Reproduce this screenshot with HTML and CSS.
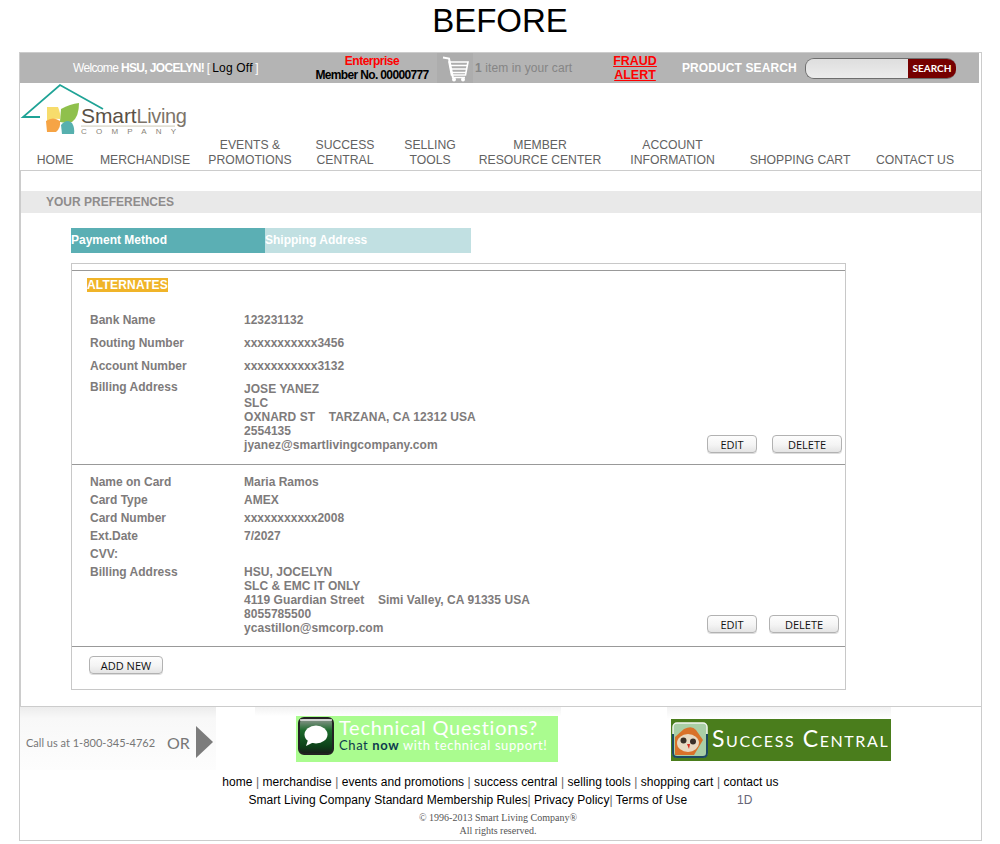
FILE: index.html
```html
<!DOCTYPE html>
<html lang="en">
<head>
<meta charset="utf-8">
<title>Your Preferences</title>
<link rel="stylesheet" href="styles.css">
</head>
<body>
<h1 class="title">BEFORE</h1>
<div class="page">
  <div class="topbar">
    <div class="welcome">Welcome <b>HSU, JOCELYN!</b> [ <a class="logoff">Log Off</a> ]</div>
    <div class="member"><div class="tier">Enterprise</div><div class="memno">Member No. 00000777</div></div>
    <div class="cartbox">
      <svg class="carticon" viewBox="0 0 36 30" width="36" height="30" aria-hidden="true">
        <path d="M6 4.500 L12 5.500 L16 25" fill="none" stroke="#fff" stroke-width="2"/>
        <path d="M12 9 H31 L28.500 22 H14.500 Z" fill="none" stroke="#fff" stroke-width="1.600"/>
        <path d="M13 12.500 H30 M14 16 H29.500 M14.500 19.500 H29" stroke="#fff" stroke-width="1.500"/>
        <path d="M15 24.500 H28" stroke="#fff" stroke-width="1.500"/>
        <circle cx="17" cy="26.500" r="2" fill="#fff"/><circle cx="26" cy="26.500" r="2" fill="#fff"/>
      </svg>
    </div>
    <div class="carttext"><b>1</b> item in your cart</div>
    <a class="fraud">FRAUD<br>ALERT</a>
    <div class="searchlabel">PRODUCT SEARCH</div>
    <div class="searchbox"><div class="searchfield"></div><div class="searchbtn">SEARCH</div></div>
  </div>

  <svg class="logo" viewBox="20 83 170 55" width="170" height="55" role="img" aria-label="Smart Living Company">
    <path d="M40 117 H23 L60 85 L103 109" fill="none" stroke="#1fa396" stroke-width="1.800"/>
    <path d="M47 107 H58 Q61 114 60 119 Q52 118 47 122 Z" fill="#f7dc6c"/>
    <path d="M61 109 Q70 104 79 103 Q79 117 72 122 Q66 123 60 122 Z" fill="#8fc04c"/>
    <path d="M46 121 Q53 116 60 121 Q61 128 56 132 H47 Z" fill="#f6a445"/>
    <path d="M61 125 Q67 118 72 123 Q75 128 74 134 H62 Z" fill="#56b0ae"/>
    <text class="logo-smart" x="81" y="123">Smart<tspan class="logo-living">Living</tspan></text>
    <rect x="81" y="125.500" width="94" height="1.200" fill="#d6d3c4"/>
    <text class="logo-company" x="81" y="134">COMPANY</text>
  </svg>

  <nav class="nav">
    <a>HOME</a>
    <a>MERCHANDISE</a>
    <a>EVENTS &amp;<br>PROMOTIONS</a>
    <a>SUCCESS<br>CENTRAL</a>
    <a>SELLING<br>TOOLS</a>
    <a>MEMBER<br>RESOURCE CENTER</a>
    <a>ACCOUNT<br>INFORMATION</a>
    <a>SHOPPING CART</a>
    <a>CONTACT US</a>
  </nav>

  <main class="main">
    <div class="prefbar">YOUR PREFERENCES</div>
    <div class="tabs">
      <div class="tab tab-active">Payment Method</div>
      <div class="tab tab-idle">Shipping Address</div>
    </div>
    <section class="panel">
      <div class="sec sec-bank">
        <div class="alt"><span class="alt-label">ALTERNATES</span></div>
        <div class="row row-tall"><div>Bank Name</div><div>123231132</div></div>
        <div class="row row-tall"><div>Routing Number</div><div>xxxxxxxxxxx3456</div></div>
        <div class="row row-tall"><div>Account Number</div><div>xxxxxxxxxxx3132</div></div>
        <div class="row row-addr row-addr-bank">
          <div>Billing Address</div>
          <div class="addr">JOSE YANEZ<br>SLC<br>OXNARD ST &nbsp; &nbsp;TARZANA, CA 12312 USA<br>2554135<br>jyanez@smartlivingcompany.com</div>
          <div class="actions actions-bank"><button class="btn btn-edit">EDIT</button><button class="btn btn-del">DELETE</button></div>
        </div>
      </div>
      <div class="sec sec-card">
        <div class="row"><div>Name on Card</div><div>Maria Ramos</div></div>
        <div class="row"><div>Card Type</div><div>AMEX</div></div>
        <div class="row"><div>Card Number</div><div>xxxxxxxxxxx2008</div></div>
        <div class="row"><div>Ext.Date</div><div>7/2027</div></div>
        <div class="row"><div>CVV:</div><div></div></div>
        <div class="row row-addr">
          <div>Billing Address</div>
          <div class="addr">HSU, JOCELYN<br>SLC &amp; EMC IT ONLY<br>4119 Guardian Street &nbsp; &nbsp;Simi Valley, CA 91335 USA<br>8055785500<br>ycastillon@smcorp.com</div>
          <div class="actions actions-card"><button class="btn btn-edit">EDIT</button><button class="btn btn-del">DELETE</button></div>
        </div>
      </div>
      <div class="sec-add"><button class="btn btn-add">ADD NEW</button></div>
    </section>
  </main>

  <footer class="footer">
    <div class="promos">
      <div class="promo-call">
        <span class="call-text">Call us at 1-800-345-4762</span><span class="call-or">OR</span>
        <svg class="call-arrow" viewBox="0 0 18 32" width="18" height="32" aria-hidden="true"><path d="M0 0 L17 16 L0 32 Z" fill="#7c7c7c"/></svg>
      </div>
      <div class="promo-tech-wrap">
        <div class="promo-tech">
          <svg class="tech-icon" viewBox="0 0 36 38" width="36" height="38" aria-hidden="true">
            <defs><linearGradient id="techg" x1="0" y1="0" x2="0" y2="1"><stop offset="0" stop-color="#9a9a9a"/><stop offset=".35" stop-color="#1c6a2c"/><stop offset=".8" stop-color="#0c3f18"/><stop offset="1" stop-color="#1a1a1a"/></linearGradient></defs>
            <rect x="1" y="1" width="34" height="36" rx="5" fill="url(#techg)" stroke="#222" stroke-width="2"/>
            <path d="M2 3 H34" stroke="#e8e8e8" stroke-width="1.500"/>
            <ellipse cx="18" cy="17.500" rx="11.500" ry="9" fill="#fff"/>
            <path d="M10 23 L8 29 L16 25 Z" fill="#fff"/>
          </svg>
          <div class="tech-copy">
            <div class="tech-head">Technical Questions?</div>
            <div class="tech-sub"><span class="tech-chat">Chat</span> <span class="tech-now">now</span> with technical support!</div>
          </div>
        </div>
      </div>
      <div class="promo-success-wrap">
        <div class="promo-success">
          <svg class="owl" viewBox="0 0 36 36" width="36" height="36" aria-hidden="true">
            <rect x="1" y="1" width="34" height="34" rx="4" fill="#a9cfa6" stroke="#f2f5ee" stroke-width="1.500"/>
            <path d="M1 12 V31 Q1 35 5 35 H31 Q35 35 35 31 V12" fill="none" stroke="#1d4a63" stroke-width="2"/>
            <path d="M3 33 V15 L12 7 Q20 3 24 8 L31 18 L22 33 Z" fill="#d9722a"/>
            <ellipse cx="16" cy="21" rx="11" ry="9" fill="#e8d9c2"/>
            <circle cx="11.500" cy="18.500" r="3" fill="#3a3028"/><circle cx="21" cy="19.500" r="3" fill="#3a3028"/>
            <path d="M15 22 L18 22 L17 27 Z" fill="#d92b1e"/>
          </svg>
          <div class="success-text">Success Central</div>
        </div>
      </div>
    </div>
    <div class="flinks">home <i>|</i> merchandise <i>|</i> events and promotions <i>|</i> success central <i>|</i> selling tools <i>|</i> shopping cart <i>|</i> contact us</div>
    <div class="flinks">Smart Living Company Standard Membership Rules<i>|</i> Privacy Policy<i>|</i> Terms of Use<span class="build">1D</span></div>
    <div class="copy">© 1996-2013 Smart Living Company®<br>All rights reserved.</div>
  </footer>
</div>
</body>
</html>
```

FILE: styles.css
```css
* { box-sizing: border-box; }
body { margin: 0; background: #fff; font-family: "Liberation Sans", Arial, sans-serif; color: #000; }

.title { margin: 0; height: 52px; padding-top: 2px; text-align: center; font-size: 33px; line-height: 38px; font-weight: 400; }

.page { margin-left: 19px; width: 963px; border: 1px solid #ccc; }

.topbar { display: flex; align-items: center; width: 959px; height: 30px; background: #b4b4b4; font-size: 12px; }
.welcome { width: 290px; padding-left: 53px; color: #fff; white-space: nowrap; letter-spacing: -.65px; }
.logoff { color: #000; letter-spacing: .2px; }
.member { width: 124px; text-align: center; font-weight: 700; line-height: 14px; white-space: nowrap; }
.tier { color: #f00; letter-spacing: -.5px; }
.memno { letter-spacing: -.65px; }
.cartbox { width: 36px; height: 30px; margin-left: 3px; background: #adadad; }
.carticon { display: block; }
.carttext { width: 127px; padding-left: 2px; color: #858585; white-space: nowrap; letter-spacing: .1px; }
.fraud { width: 70px; text-align: center; color: #f00; font-size: 12.500px; line-height: 14px; font-weight: 700; text-decoration: underline; }
.searchlabel { margin-left: 12px; width: 123px; color: #fff; font-size: 12px; letter-spacing: .1px; font-weight: 700; white-space: nowrap; }
.searchbox { display: flex; width: 151px; height: 21px; border-radius: 9px; overflow: hidden; border: 1px solid #6e6e6e; border-right: 0; }
.searchfield { width: 102px; background: linear-gradient(#dedede, #ececec); }
.searchbtn { flex: 1; background: #760000; color: #fff; font-family: "Lato", sans-serif; font-weight: 700; font-size: 10px; line-height: 18px; text-align: center; }

.logo { display: block; }
.logo-smart { font-family: "Liberation Sans", sans-serif; font-size: 21px; fill: #5a5045; letter-spacing: -.1px; }
.logo-living { font-size: 20px; fill: #7d7469; letter-spacing: -.4px; }
.logo-company { font-family: "Liberation Sans", sans-serif; font-size: 8px; fill: #8a8478; letter-spacing: 9.200px; }

.nav { display: grid; grid-template-columns: 70px 110px 100px 90px 80px 140px 125px 130px 100px; align-items: end; height: 32px; padding-bottom: 3px; font-size: 12.200px; line-height: 15px; color: #626262; text-align: center; white-space: nowrap; }

.main { border: 1px solid #ccc; margin: 0 -1px 0 0; height: 537px; padding-top: 20px; width: 962px; }
.prefbar { height: 22px; padding-left: 25px; background: #e9e9e9; color: #8f8c8c; font-size: 12px; font-weight: 700; line-height: 23px; }
.tabs { display: flex; margin: 15px 0 0 50px; height: 25px; }
.tab { color: #fff; font-size: 12px; font-weight: 700; line-height: 24px; }
.tab-active { width: 194px; background: #5bafb4; }
.tab-idle { width: 206px; background: #c1e0e2; }

.panel { width: 775px; height: 427px; margin: 10px 0 0 50px; border: 1px solid #c8c8c8; padding-top: 6px; color: #7e7b7b; font-size: 12px; font-weight: 700; }
.sec { border-top: 1px solid #999; padding: 0 3px 0 18px; }
.sec-bank { height: 194px; padding-top: 7px; }
.sec-card { height: 182px; padding-top: 8px; }
.sec-add { border-top: 1px solid #999; padding: 9px 0 0 17px; }
.alt { height: 14px; margin: 0 0 17px -3px; }
.alt-label { display: inline-block; height: 14px; background: #f0b429; color: #fff; line-height: 14px; letter-spacing: .2px; }

.row { display: grid; grid-template-columns: 154px 1fr auto; height: 18px; line-height: 18px; }
.row-tall { height: 23px; line-height: 23px; }
.row-addr { height: auto; line-height: 14px; padding-top: 2px; }
.row-addr-bank { margin-top: 2px; padding-top: 0; }
.row-addr-bank .addr { padding-top: 2px; }
.addr { white-space: nowrap; letter-spacing: .05px; }
.actions { display: flex; align-self: end; }
.actions-bank { gap: 15px; margin-bottom: -1px; }
.actions-card { gap: 12px; margin-bottom: 2px; margin-right: 3px; }

.btn { display: block; height: 18px; padding: 1px 0 0; border: 1px solid #b2b2b2; border-radius: 4px; background: linear-gradient(#fdfdfd, #f4f4f4 55%, #e4e4e4); color: #111; font-family: "Open Sans", sans-serif; font-size: 11px; line-height: 15px; box-shadow: 0 1px 0 #ddd; }
.btn-edit { width: 50px; }
.btn-del { width: 70px; }
.btn-add { width: 74px; }

.promos { display: flex; height: 64px; }
.promo-call { display: flex; align-items: center; width: 196px; height: 63px; padding: 7px 0 0 6px; background: linear-gradient(#ececec, #f8f8f8 18%, #fdfdfd); color: #777; white-space: nowrap; }
.call-text { font-family: "Lato", sans-serif; font-size: 11px; width: 141px; }
.call-or { font-family: "Lato", sans-serif; font-size: 16px; width: 29px; }
.call-arrow { display: block; flex: none; }

.promo-tech-wrap { width: 306px; height: 58px; margin-left: 39px; padding: 9px 3px 0 41px; background: linear-gradient(#f2f2f2, #fff 9px); }
.promo-tech { display: flex; height: 46px; background: #aafc8f; padding: 1px 0 0 2px; }
.tech-icon { display: block; flex: none; }
.tech-copy { padding-left: 5px; color: #fff; font-family: "Lato", sans-serif; white-space: nowrap; }
.tech-head { font-size: 20px; line-height: 20px; letter-spacing: .75px; }
.tech-sub { font-size: 13px; line-height: 16px; letter-spacing: .6px; }
.tech-chat { color: #0e3a4e; }
.tech-now { color: #0e3a4e; font-weight: 700; }

.promo-success-wrap { width: 224px; height: 63px; margin-left: 106px; padding: 12px 0 0 4px; background: linear-gradient(#f2f2f2, #fff 12px); }
.promo-success { display: flex; align-items: center; height: 42px; background: #4a7d1c; padding-left: 1px; }
.owl { display: block; flex: none; }
.success-text { margin: 0 0 5px 4px; color: #fff; font-family: "Lato", sans-serif; font-variant: small-caps; font-size: 23px; line-height: 30px; letter-spacing: 1.600px; white-space: nowrap; }

.flinks { height: 18px; font-size: 12px; line-height: 18px; letter-spacing: .05px; text-align: center; white-space: nowrap; }
.promos + .flinks { margin-top: 2px; }
.flinks i { font-style: normal; color: #666; }
.build { margin-left: 50px; color: #667; }
.copy { margin-top: 2px; padding: 0 5px 3px 0; text-align: center; color: #555; font-family: "Liberation Serif", serif; font-size: 10px; line-height: 13px; }
```
